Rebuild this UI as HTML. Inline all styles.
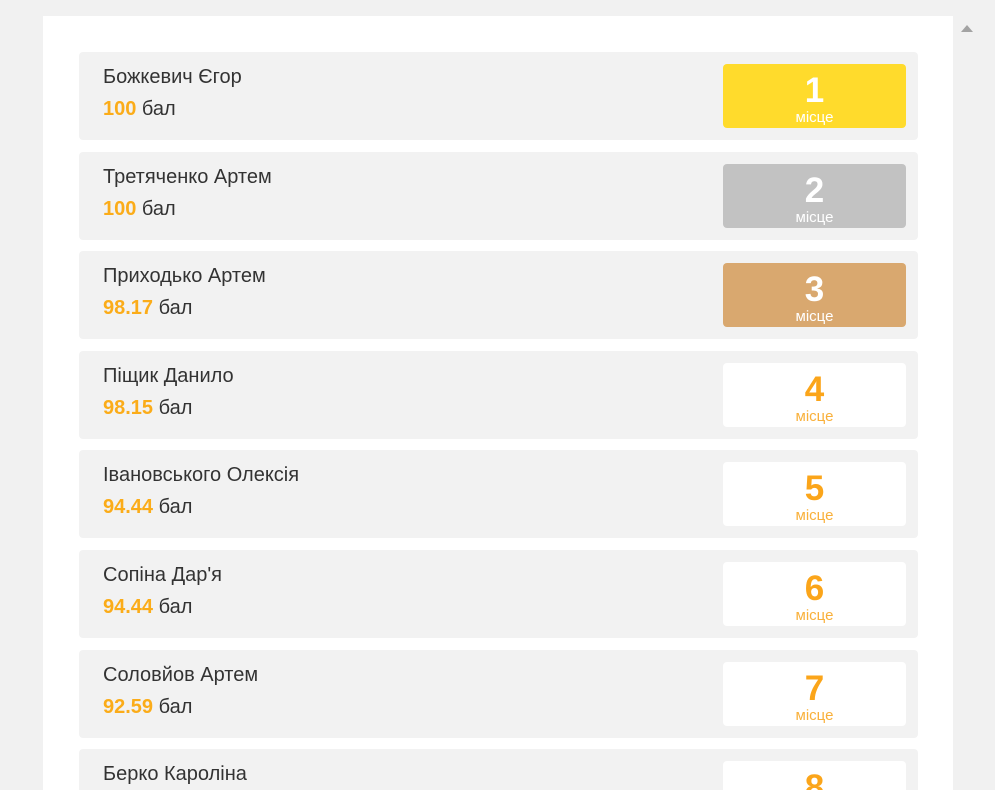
<!DOCTYPE html>
<html><head><meta charset="utf-8"><style>
html,body{margin:0;padding:0;width:995px;height:790px;overflow:hidden;background:#f1f1f1;font-family:"Liberation Sans",Arial,sans-serif;}
.panel{position:absolute;left:43px;top:16px;width:910px;height:774px;background:#fff;}
.arrow{position:absolute;left:961px;top:25px;width:0;height:0;border-left:6px solid transparent;border-right:6px solid transparent;border-bottom:7px solid #a3a3a3;}
.card{position:absolute;left:79px;width:839px;height:88px;background:#f2f2f2;border-radius:4px;}
.name{position:absolute;left:24px;top:14px;font-size:20px;color:#333;}
.score{position:absolute;left:24px;top:46px;font-size:20px;color:#333;}
.score b{color:#fbac19;}
.badge{position:absolute;left:644px;top:12px;width:183px;height:64px;border-radius:4px;background:#fff;text-align:center;color:#fba51a;}
.badge .n{font-size:35px;font-weight:bold;line-height:35px;margin-top:9px;}
.badge .m{font-size:15px;line-height:16px;margin-top:2px;color:#f9b03a;}
.g{background:#ffdb2c;color:#fff}.s{background:#c2c2c2;color:#fff}.b{background:#d9a86f;color:#fff}
.g .m,.s .m,.b .m{color:#fff}
</style></head><body>
<div class="panel"></div>
<div class="arrow"></div>
<div class="card" style="top:52px"><div class="name">Божкевич Єгор</div><div class="score"><b>100</b> бал</div><div class="badge g"><div class="n">1</div><div class="m">місце</div></div></div>
<div class="card" style="top:152px"><div class="name">Третяченко Артем</div><div class="score"><b>100</b> бал</div><div class="badge s"><div class="n">2</div><div class="m">місце</div></div></div>
<div class="card" style="top:251px"><div class="name">Приходько Артем</div><div class="score"><b>98.17</b> бал</div><div class="badge b"><div class="n">3</div><div class="m">місце</div></div></div>
<div class="card" style="top:351px"><div class="name">Піщик Данило</div><div class="score"><b>98.15</b> бал</div><div class="badge"><div class="n">4</div><div class="m">місце</div></div></div>
<div class="card" style="top:450px"><div class="name">Івановського Олексія</div><div class="score"><b>94.44</b> бал</div><div class="badge"><div class="n">5</div><div class="m">місце</div></div></div>
<div class="card" style="top:550px"><div class="name">Сопіна Дар'я</div><div class="score"><b>94.44</b> бал</div><div class="badge"><div class="n">6</div><div class="m">місце</div></div></div>
<div class="card" style="top:650px"><div class="name">Соловйов Артем</div><div class="score"><b>92.59</b> бал</div><div class="badge"><div class="n">7</div><div class="m">місце</div></div></div>
<div class="card" style="top:749px;height:41px;border-radius:4px 4px 0 0"><div class="name">Берко Кароліна</div><div class="badge" style="height:29px;border-radius:4px 4px 0 0;overflow:hidden"><div class="n">8</div></div></div>
</body></html>
